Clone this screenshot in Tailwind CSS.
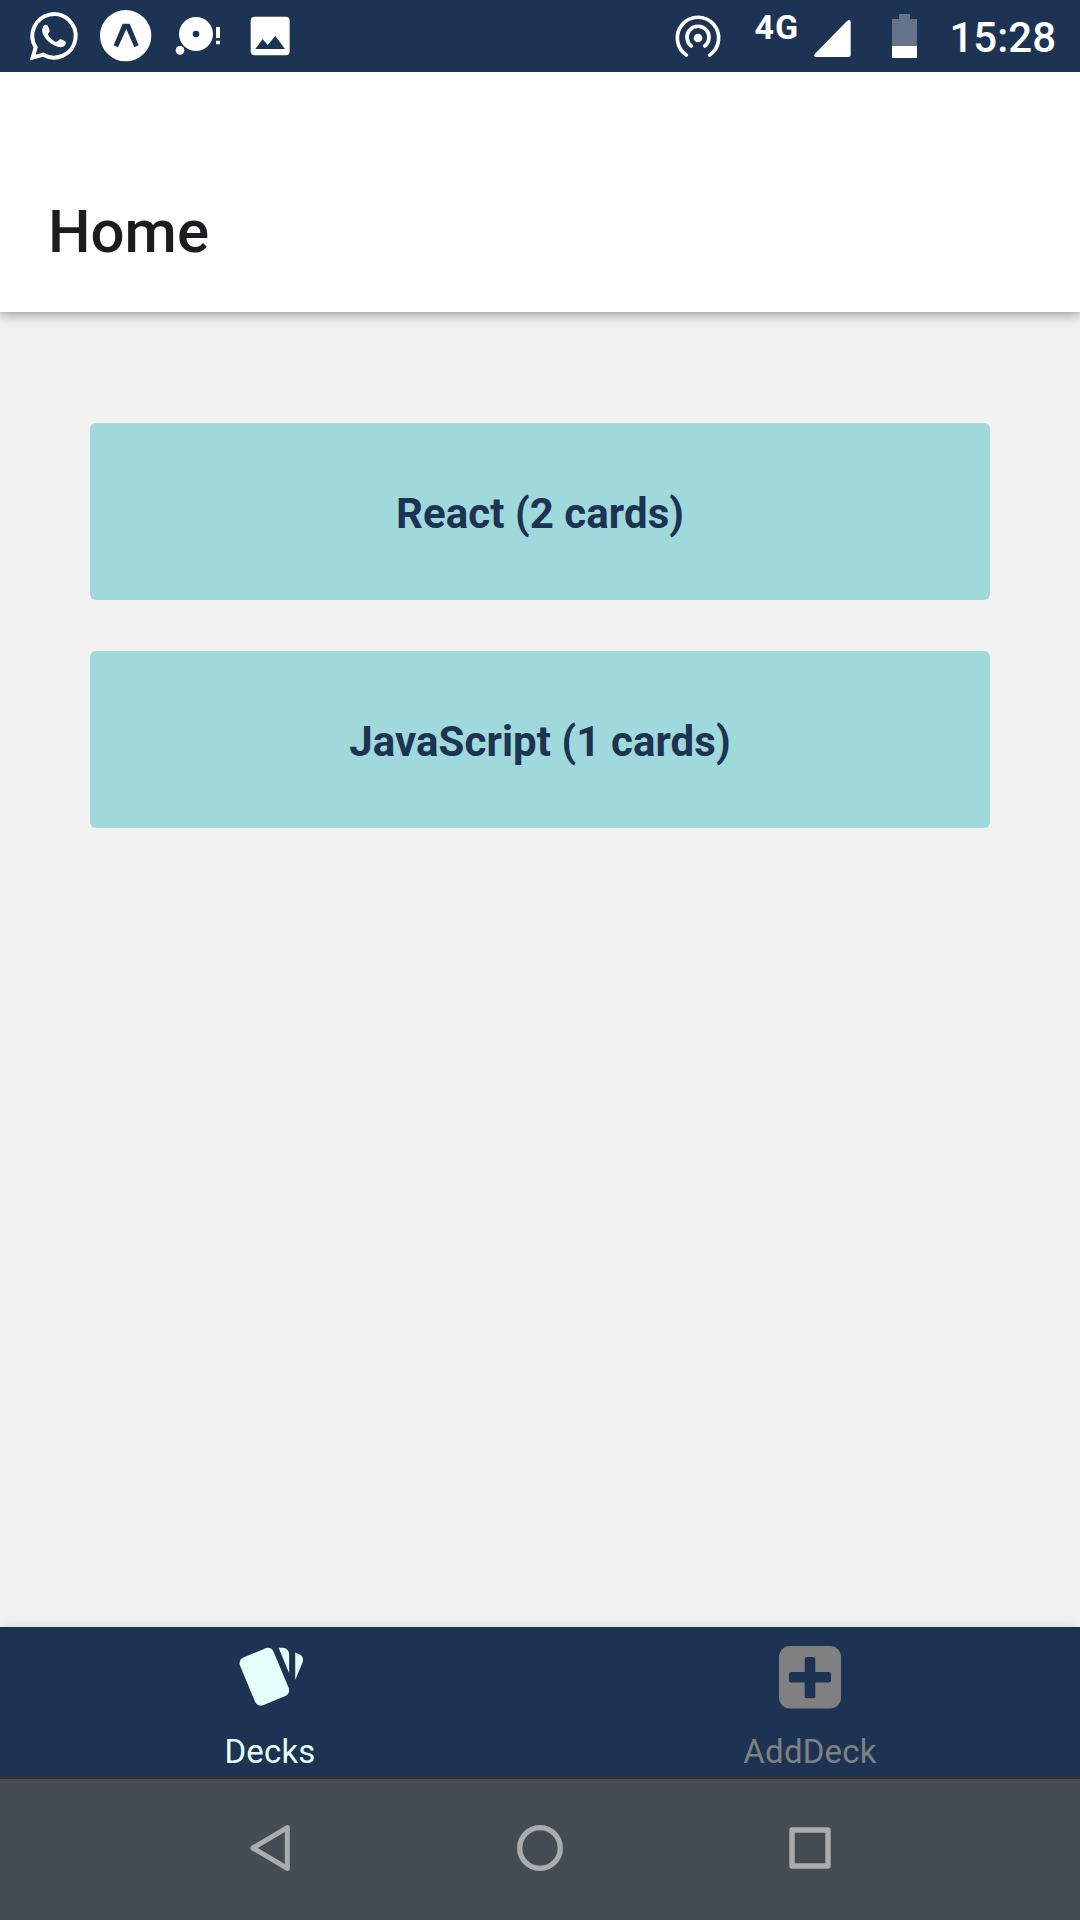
<!DOCTYPE html>
<html lang="en">
<head>
<meta charset="utf-8">
<title>Home</title>
<script src="https://cdn.jsdelivr.net/npm/@tailwindcss/browser@4"></script>
</head>
<body class="bg-[#f2f2f2]">
<div class="flex h-[1920px] w-[1080px] flex-col overflow-hidden font-['Roboto',sans-serif]">
  <!-- Status bar -->
  <div class="z-20 flex h-[72px] shrink-0 justify-between bg-[#1d3353] pr-[24px] pl-[18px] text-white">
    <div class="flex">
      <svg class="size-[72px]" viewBox="54 0 216 216" fill="none">
        <path d="M98 173L107 142A65 65 0 1 1 130 164Z" stroke="#fff" stroke-width="12"/>
        <path fill="#fff" d="M128 84C130 76 136 73 141 75C145 78 148 87 149 93C150 97 143 100 144 104C149 114 158 121 168 126C173 126 176 118 181 118C186 119 193 122 197 125C199 130 196 137 189 140C182 143 174 141 165 137C148 130 134 116 128 100C126 94 126 88 128 84Z"/>
      </svg>
      <svg class="size-[72px]" viewBox="270 0 216 216">
        <circle cx="377" cy="107" r="77" fill="#fff"/>
        <path fill="#1d3353" d="M368 71H389L416 136L403 142L379 87L354 142L341 136Z"/>
      </svg>
      <svg class="size-[72px]" viewBox="486 0 216 216" fill="#fff">
        <circle cx="588" cy="102" r="51"/><circle cx="588" cy="102" r="10" fill="#1d3353"/><circle cx="540" cy="151" r="13"/>
        <path d="M648 81H660V114H648ZM648 122H660V133H648Z"/>
      </svg>
      <svg class="size-[72px]" viewBox="702 0 216 216">
        <rect x="752" y="50" width="117" height="116" rx="12" fill="#fff"/>
        <path fill="#1d3353" d="M766 147L788 117L803 135L826 108L855 147Z"/>
      </svg>
    </div>
    <div class="flex">
      <svg class="h-[72px] w-[72px]" viewBox="36 0 216 216" fill="none" stroke="#fff" stroke-width="11" stroke-linecap="round">
        <circle cx="144" cy="114" r="13" fill="#fff" stroke="none"/>
        <path d="M124 138A33 33 0 1 1 164 138M109 165A62 62 0 1 1 179 165"/>
      </svg>
      <div class="ml-[20px] w-[60px] pt-[7px] text-[34px] leading-[40px] font-bold tracking-[1px]">4G</div>
      <svg class="h-[72px] w-[37px]" viewBox="492 0 111 216"><path fill="#fff" d="M591 63Q602 55 602 67V165Q602 171 596 171H497Q489 168 495 161Z"/></svg>
      <svg class="ml-[41px] h-[72px] w-[25px]" viewBox="726 0 75 216"><path fill="#65748a" d="M747 42H780V57H801V138H726V57H747Z"/><path fill="#fff" d="M726 138H801V174H726Z"/></svg>
      <div class="ml-[32px] pt-[13px] text-[42px] leading-[50px] font-medium">15:28</div>
    </div>
  </div>
  <!-- Header -->
  <header class="z-10 flex h-[240px] shrink-0 items-end bg-white pb-[45px] pl-[48px] shadow-[0_2px_12px_rgba(0,0,0,0.42)]">
    <h1 class="text-[60px] leading-[70px] font-medium text-[#1c1c1e]">Home</h1>
  </header>
  <!-- Deck list -->
  <main class="flex grow flex-col gap-[51px] px-[90px] pt-[111px] text-center text-[42px] leading-[50px] font-bold text-[#1d3353]">
    <div class="h-[177px] rounded-[6px] bg-[#9fd9db] pt-[66px] tracking-[0.07px]">React (2 cards)</div>
    <div class="h-[177px] rounded-[6px] bg-[#9fd9db] pt-[66px] tracking-[0.07px]">JavaScript (1 cards)</div>
  </main>
  <!-- Tabs -->
  <nav class="grid h-[149px] shrink-0 grid-cols-2 bg-[#1d3353] text-[33px] leading-[40px] tracking-[0.2px] shadow-[0_0_12px_rgba(0,0,0,0.12)]">
    <div class="flex flex-col items-center justify-between pt-[14px] pb-[4px] text-[#e6fffc]">
      <svg class="size-[73px]" viewBox="0 0 24 24" fill="currentColor"><path d="M21.47,4.35L20.13,3.79V12.82L22.56,6.96C22.97,5.94 22.5,4.77 21.47,4.35M1.97,8.05L6.93,20C7.24,20.77 7.97,21.24 8.74,21.26C9,21.26 9.27,21.21 9.53,21.1L16.9,18.05C17.65,17.74 18.11,17 18.13,16.26C18.14,16 18.09,15.71 18,15.45L13,3.5C12.71,2.73 11.97,2.26 11.19,2.25C10.93,2.25 10.67,2.31 10.42,2.4L3.06,5.45C2.04,5.87 1.55,7.04 1.97,8.05M18.12,4.25A2,2 0 0,0 16.12,2.25H14.67L18.12,10.59"/></svg>
      <span>Decks</span>
    </div>
    <div class="flex flex-col items-center justify-between pt-[14px] pb-[4px] text-[#808080]">
      <svg class="size-[72px]" viewBox="0 0 72 72"><rect x="5" y="5" width="62" height="62.5" rx="11" fill="currentColor"/><g fill="#1d3353"><rect x="30.7" y="16" width="10.6" height="41.3" rx="2"/><rect x="15" y="31" width="42" height="10.6" rx="2"/></g></svg>
      <span>AddDeck</span>
    </div>
  </nav>
  <!-- System navigation -->
  <div class="flex h-[144px] shrink-0 items-center justify-center gap-[198px] border-t-[3px] border-[#2f3334] bg-[#454d52] pb-[3px]">
    <svg class="size-[72px]" viewBox="0 0 72 72" fill="none" stroke="#a9adaf" stroke-width="5" stroke-linejoin="round"><path d="M53.3 15.6V56.4L18.8 36Z"/></svg>
    <svg class="size-[72px]" viewBox="0 0 72 72" fill="none" stroke="#a9adaf" stroke-width="5.3"><circle cx="36" cy="36" r="20.3"/></svg>
    <svg class="size-[72px]" viewBox="0 0 72 72" fill="none" stroke="#a9adaf" stroke-width="5.4" stroke-linejoin="round"><rect x="18" y="18" width="36" height="36"/></svg>
  </div>
</div>
</body>
</html>
